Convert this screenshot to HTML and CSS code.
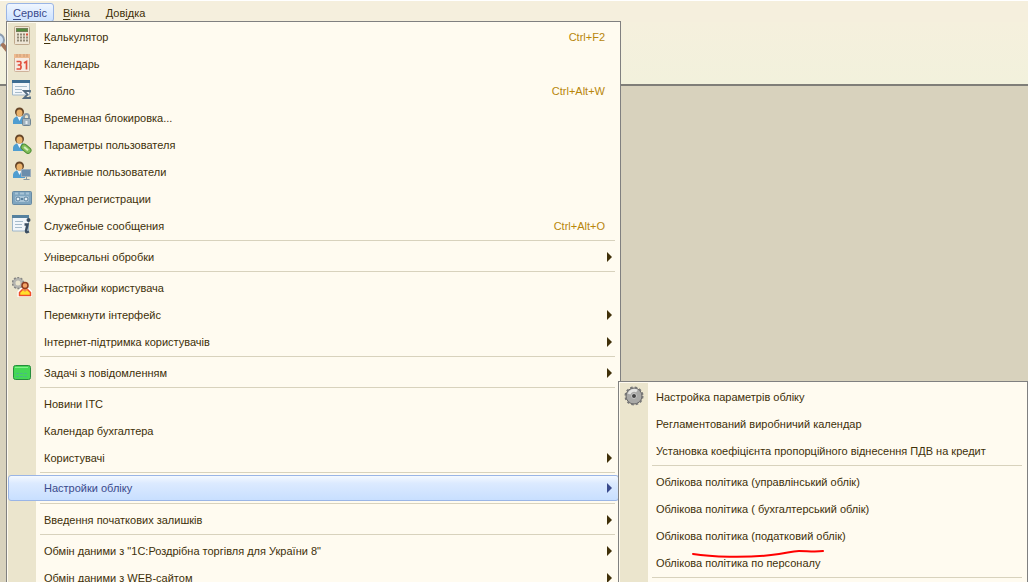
FILE: index.html
```html
<!DOCTYPE html>
<html lang="uk">
<head>
<meta charset="utf-8">
<title>Сервіс</title>
<link rel="stylesheet" href="styles.css">
</head>
<body>
<div class="app">
  <nav class="menubar" aria-label="Головне меню">
    <button class="tab tab-open" type="button"><u>С</u>ервіс</button>
    <button class="tab" type="button"><u>В</u>ікна</button>
    <button class="tab" type="button">Дов<u>і</u>дка</button>
  </nav>
  <div class="toolbar">
    <svg class="lens" width="18" height="20" viewBox="0 0 18 20"><circle cx="7" cy="7" r="6" fill="#cfe2f4" stroke="#8d9cae" stroke-width="2"/><path d="M12 12l4 5" stroke="#a5765c" stroke-width="4" stroke-linecap="round"/></svg>
  </div>
  <main class="workspace"></main>

  <ul class="menu menu-main">
    <li><button class="item" type="button">
      <svg class="icon" viewBox="0 0 20 20"><rect x="2.5" y=".5" width="15" height="18" rx="1" fill="#eee6d6" stroke="#bfa98c"/><rect x="4.500" y="2.500" width="11" height="3" fill="#528a3c" stroke="#6f7d57"/><path d="M5 8.500h2m1 0h2m1 0h2m-8 3h2m1 0h2m1 0h2m-8 3h2m1 0h2m1 0h2" stroke="#8f8875" stroke-width="2"/><path d="M14 8.500h2" stroke="#d8503a" stroke-width="2"/><path d="M14 11.500h2m-2 3h2" stroke="#8f8875" stroke-width="2"/></svg>
      <span class="label"><u>К</u>алькулятор</span><kbd class="key">Ctrl+F2</kbd></button></li>
    <li><button class="item" type="button">
      <svg class="icon" viewBox="0 0 20 20"><rect x="2.500" y="1.500" width="15" height="17" rx="1" fill="#f6ebe2" stroke="#ceb29a"/><path d="M2 1h16v4H2z" fill="#edb98e"/><path d="M5 1v3m3-3v3m4-3v3m3-3v3" stroke="#c99e78"/><path d="M4.500 8.500h3.500q1 0 1 1.500t-1.500 2q2 .5 1.500 2.500t-1 1.500H4.500M6 12h2M12 10l2.500-1.500v8" fill="none" stroke="#e2503e" stroke-width="1.700"/></svg>
      <span class="label">Кален<u>д</u>арь</span></button></li>
    <li><button class="item" type="button">
      <svg class="icon" viewBox="0 0 20 20"><path d="M.5 1h17v14H.5z" fill="#f2f6fa" stroke="#9eb6c9"/><path d="M0 0h18v3H0z" fill="#3c6c92"/><path d="M3 6.500h12m-12 3h7m-7 3h7" stroke="#a7bccb"/><path d="M18 12.500V11h-6l3.500 3.500L12 18h6v-1.500" fill="none" stroke="#536b80" stroke-width="1.800"/></svg>
      <span class="label">Табло</span><kbd class="key">Ctrl+Alt+W</kbd></button></li>
    <li><button class="item" type="button">
      <svg class="icon" viewBox="0 0 20 20"><use href="#person"/><path d="M12 12V9.500a2.500 2.500 0 0 1 5 0V12" fill="none" stroke="#8698a6" stroke-width="2"/><rect x="10.500" y="11.500" width="8" height="7" rx="1" fill="#a3b4c0" stroke="#708492"/><path d="M14.500 14v3" stroke="#e6edf2" stroke-width="2"/></svg>
      <span class="label">Временная блокировка...</span></button></li>
    <li><button class="item" type="button">
      <svg class="icon" viewBox="0 0 20 20"><use href="#person"/><g transform="rotate(40 14 14)"><rect x="9" y="11.500" width="11" height="6" rx="3" fill="#82be59" stroke="#4e8e34"/><path d="M12 14.500h5" stroke="#d2eebc" stroke-width="2"/></g></svg>
      <span class="label">Параметры пользователя</span></button></li>
    <li><button class="item" type="button">
      <svg class="icon" viewBox="0 0 20 20"><use href="#person"/><rect x="9.500" y="8.500" width="9" height="7" fill="#6b8dac" stroke="#9cadbb"/><path d="M14.500 16v2m-3 .5h6" stroke="#8997a1"/></svg>
      <span class="label">Активные пользователи</span></button></li>
    <li><button class="item" type="button">
      <svg class="icon" viewBox="0 0 20 20"><rect x=".5" y="3.500" width="19" height="13" rx="1" fill="#7fa5bf" stroke="#6689a3"/><path d="M3 5.500h3m2 0h4m2 0h3" stroke="#a8c4d6" stroke-width="2"/><rect x="3" y="8" width="14" height="6" rx="2" fill="#a9c5d7"/><circle cx="6" cy="11" r="2" fill="#e3eef4" stroke="#587f9c"/><circle cx="14" cy="11" r="2" fill="#e3eef4" stroke="#587f9c"/><path d="M9 11h2" stroke="#587f9c" stroke-width="2"/></svg>
      <span class="label">Журнал регистрации</span></button></li>
    <li><button class="item" type="button">
      <svg class="icon" viewBox="0 0 20 20"><path d="M.5 1h16v15H.5z" fill="#f2f6fa" stroke="#9eb6c9"/><path d="M0 0h17v3H0z" fill="#55819f"/><path d="M3 6.500h8m-8 3h7m-7 3h7" stroke="#a7bccb"/><circle cx="16.500" cy="5" r="2" fill="#3b4e61"/><path d="M12.500 9.500h3l-1.500 6.500c0 1.500 1 1.500 3 .5" fill="none" stroke="#3b4e61" stroke-width="2.500"/></svg>
      <span class="label">Служебные сообщения</span><kbd class="key">Ctrl+Alt+O</kbd></button></li>
    <li class="line"></li>
    <li><button class="item sub" type="button"><span class="label">Універсальні обробки</span></button></li>
    <li class="line"></li>
    <li><button class="item" type="button">
      <svg class="icon" viewBox="0 0 20 20"><circle cx="6" cy="6" r="4" fill="none" stroke="#b4b4b0" stroke-width="3"/><circle cx="6" cy="6" r="5.500" fill="none" stroke="#858583" stroke-width="1.500" stroke-dasharray="2 1.500"/><path d="M7 19v-4l3-3h6l3 3v4z" fill="#ffdf2b" stroke="#fff" stroke-width="3"/><path d="M7.500 18.500v-3l3-3h5l3 3v3z" fill="#ffdf2b" stroke="#ef4e28" stroke-width="1.500"/><path d="M10 12l3 3 3-3" fill="#f6894e"/><circle cx="13" cy="8.500" r="3" fill="#f3a467" stroke="#8f3c21" stroke-width="1.500"/></svg>
      <span class="label">Настройки користувача</span></button></li>
    <li><button class="item sub" type="button"><span class="label">Перемкнути інтерфейс</span></button></li>
    <li><button class="item sub" type="button"><span class="label">Інтернет-підтримка користувачів</span></button></li>
    <li class="line"></li>
    <li><button class="item sub" type="button">
      <svg class="icon" viewBox="0 0 20 20"><rect x="1.500" y="3.500" width="17" height="14" rx="2" fill="#45d856" stroke="#268d3c"/><path d="M3 5.500h13" stroke="#83f18b"/><path d="M4 11.500h12M4 14.500h12" stroke="#48b986" stroke-dasharray="3 1"/></svg>
      <span class="label">Задачі з повідомленням</span></button></li>
    <li class="line"></li>
    <li><button class="item" type="button"><span class="label">Новини ІТС</span></button></li>
    <li><button class="item" type="button"><span class="label">Календар бухгалтера</span></button></li>
    <li><button class="item sub" type="button"><span class="label">Користувачі</span></button></li>
    <li class="line"></li>
    <li><button class="item sub active" type="button" aria-expanded="true"><span class="label">Настройки обліку</span></button></li>
    <li class="line"></li>
    <li><button class="item sub" type="button"><span class="label">Введення початкових залишків</span></button></li>
    <li class="line"></li>
    <li><button class="item sub" type="button"><span class="label">Обмін даними з "1С:Роздрібна торгівля для України 8"</span></button></li>
    <li><button class="item sub" type="button"><span class="label">Обмін даними з WEB-сайтом</span></button></li>
  </ul>

  <ul class="menu menu-sub">
    <li><button class="item" type="button">
      <svg class="icon" viewBox="0 0 20 20"><circle cx="10" cy="10" r="8" fill="#a9a9a7" stroke="#666"/><circle cx="10" cy="10" r="8.500" fill="none" stroke="#777" stroke-width="2" stroke-dasharray="2.500 2"/><path d="M5 8a5.500 5.500 0 0 1 8-3" fill="none" stroke="#e2e2e0" stroke-width="3"/><circle cx="10" cy="10" r="2.500" fill="#444" stroke="#ccc"/></svg>
      <span class="label">Настройка параметрів обліку</span></button></li>
    <li><button class="item" type="button"><span class="label">Регламентований виробничий календар</span></button></li>
    <li><button class="item" type="button"><span class="label">Установка коефіцієнта пропорційного віднесення ПДВ на кредит</span></button></li>
    <li class="line"></li>
    <li><button class="item" type="button"><span class="label">Облікова політика (управлінський облік)</span></button></li>
    <li><button class="item" type="button"><span class="label">Облікова політика ( бухгалтерський облік)</span></button></li>
    <li><button class="item" type="button"><span class="label">Облікова політика (податковий облік)</span></button></li>
    <li><button class="item" type="button"><span class="label">Облікова політика по персоналу</span></button></li>
    <li class="line"></li>
  </ul>
  <svg class="mark" width="134" height="10" viewBox="0 0 134 10"><path d="M2 4C20 7 55 8 80 5C95 4 99 1 108 1C116 1 124 2 132 1" fill="none" stroke="#f00" stroke-width="2" stroke-linecap="round"/></svg>
</div>
<svg width="0" height="0" class="defs"><defs><g id="person"><path d="M1 17v-3c0-3 3-5 7-5s5 2 5 5v3z" fill="#4f9dd0"/><path d="M5 9l2.500 5L10 9z" fill="#f2f7fb"/><circle cx="7.500" cy="5" r="4.500" fill="#664527"/><ellipse cx="7.500" cy="6" rx="3" ry="3.500" fill="#eab26b"/></g></defs></svg>
</body>
</html>
```
FILE: styles.css
```css
* { box-sizing: border-box; }
body {
  margin: 0;
  overflow: hidden;
  font: 11px/14px "Liberation Sans", Arial, sans-serif;
  color: #403009;
}
button { font: inherit; color: inherit; border: 0; background: none; text-align: left; }
u { text-underline-offset: 2px; }
.app { position: relative; display: flex; flex-direction: column; height: 100vh; overflow: hidden; }
.menubar {
  display: flex;
  gap: 2px;
  height: 22px;
  padding: 2px 6px 0;
  border-top: 1px solid #fff;
  background: #f5efdd;
}
.tab { height: 19px; padding: 0 6px; border: 1px solid transparent; border-radius: 3px; }
.tab-open { border-color: #9ab5e6; background: linear-gradient(#f0f6ff, #cbe1ff); color: #3a4a8c; }
.toolbar { height: 64px; border-bottom: 2px solid #7f7e78; background: linear-gradient(#f5f0dd, #f2f1dc); }
.lens { display: block; margin: 11px 0 0 -9px; }
.workspace { flex: 1; background: #d8d2bd; }
.menu {
  position: absolute;
  margin: 0;
  padding: 2px 1px;
  list-style: none;
  border: 1px solid #808080;
  background: linear-gradient(#ebe5cd, #ebe5cd) 1px 1px / 28px 100% no-repeat #fffbf0;
}
.menu-main { top: 21px; left: 6px; width: 615px; }
.menu-sub { top: 381px; left: 618px; width: 410px; min-height: 210px; }
.item { position: relative; display: flex; align-items: center; width: 100%; height: 27px; padding: 0 14px 2px 36px; }
.icon { position: absolute; left: 4px; top: 2px; width: 20px; height: 20px; }
.label { flex: 1; white-space: nowrap; }
.key { font: inherit; color: #b8860b; }
.sub::after {
  content: "";
  margin-right: -7px;
  border: solid transparent;
  border-width: 5px 0 5px 5px;
  border-left-color: #403009;
}
.active {
  height: 26px;
  margin: -1px 0 2px;
  border: 1px solid #9ab5e6;
  border-radius: 3px;
  padding: 0 13px 0 35px;
  background: linear-gradient(#f4f9ff, #dceaff 30%, #c8dfff);
  color: #3a4a8c;
}
.active::after { border-left-color: #3a4a8c; }
.line { height: 4px; margin: 0 4px 0 32px; border-top: 1px solid #d8d2bd; }
.mark { position: absolute; left: 691px; top: 550px; }
.defs { position: absolute; }
```
